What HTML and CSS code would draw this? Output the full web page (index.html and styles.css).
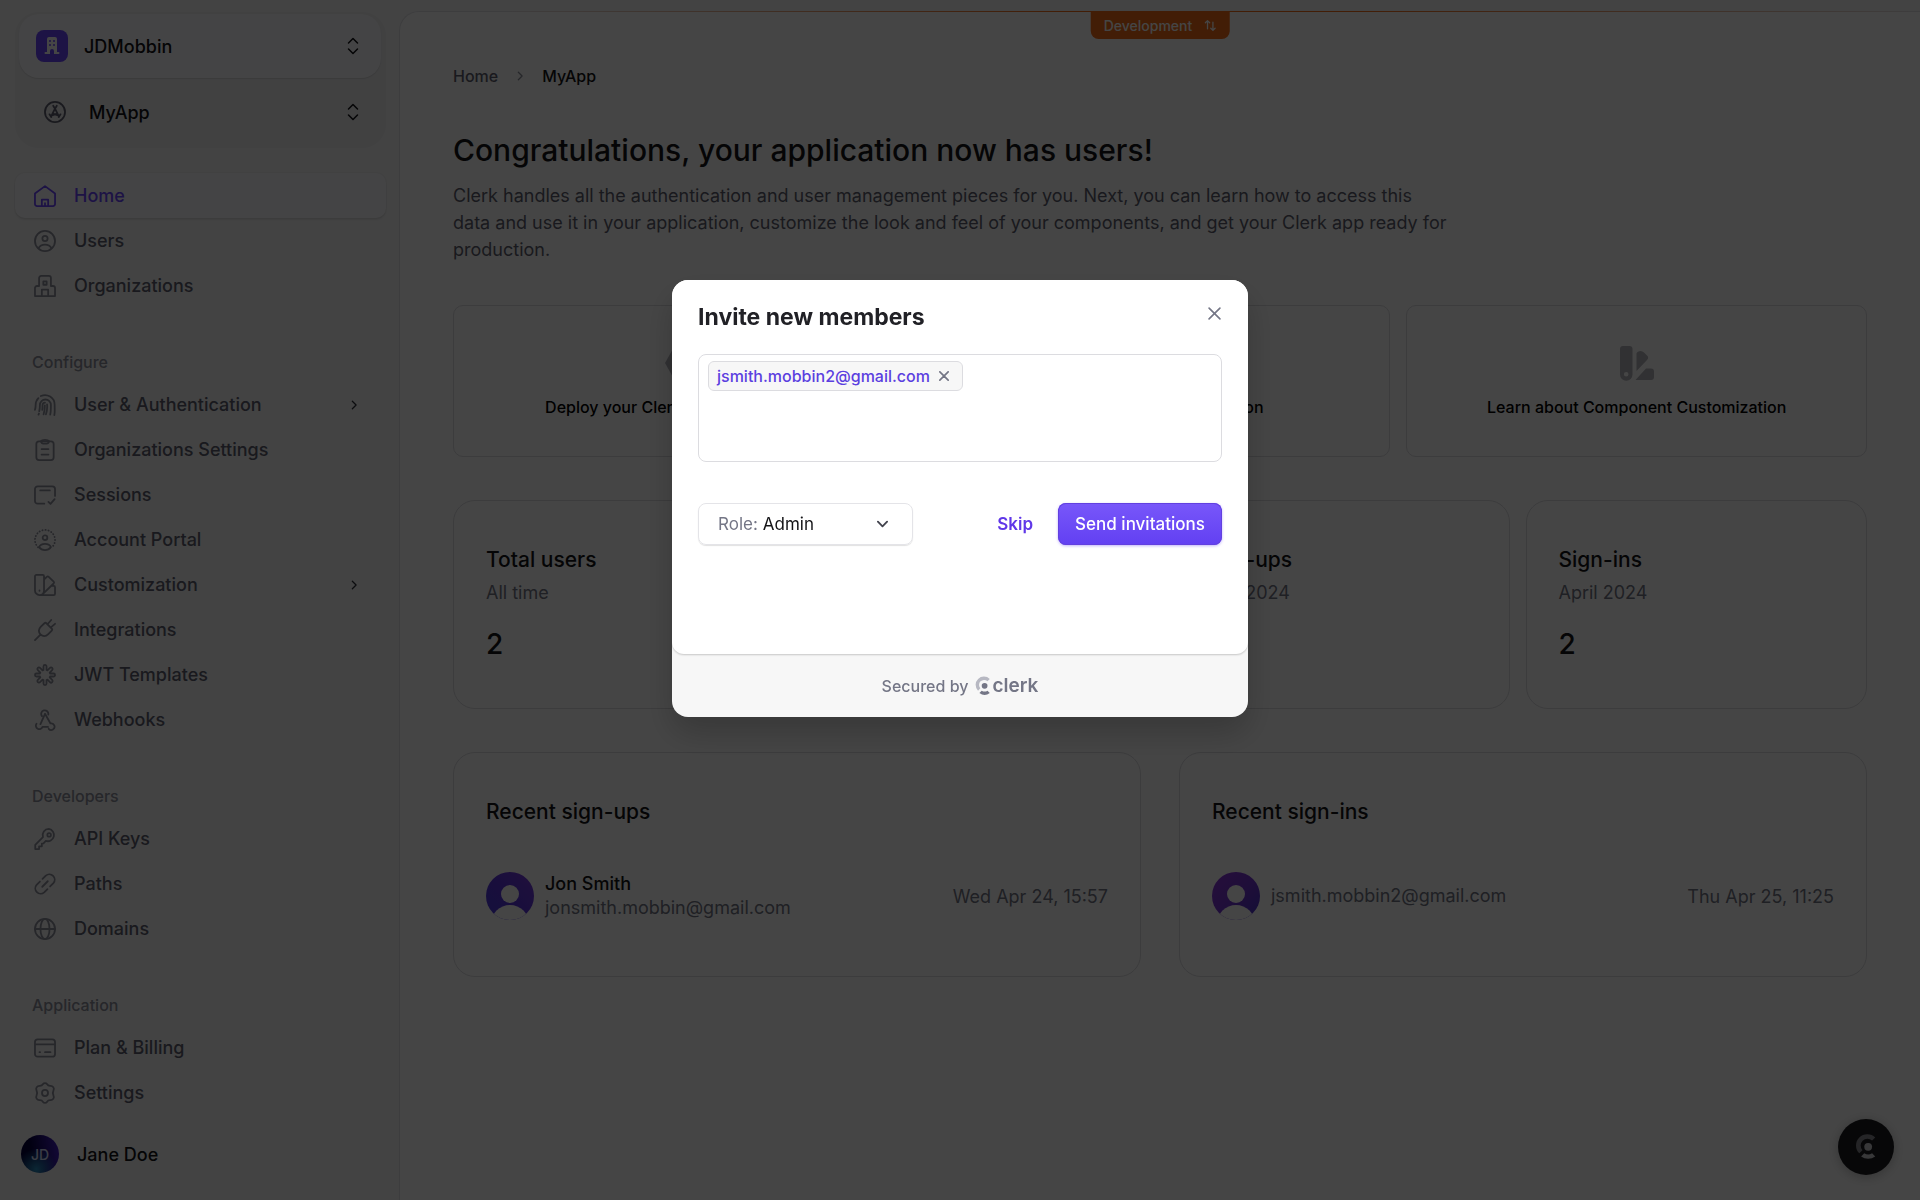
FILE: index.html
```
<!DOCTYPE html>
<html lang="en">
<head>
  <meta charset="UTF-8" />
  <meta name="viewport" content="width=device-width, initial-scale=1" />
  <title>MyApp | Clerk</title>
  <link rel="stylesheet" href="styles.css">
</head>
<body>
  <div class="app">
    <aside class="sidebar">
      <div class="switcher">
        <button class="switcher-org" type="button">
          <svg class="org-logo" viewBox="0 0 32 32">
            <rect width="32" height="32" rx="8" fill="#6c47ff"/>
            <path fill="#fff" d="M11 9a2 2 0 0 1 2-2h6a2 2 0 0 1 2 2v13h1.500a1 1 0 0 1 0 2H18v-3a2 2 0 0 0-4 0v3H9.500a1 1 0 0 1 0-2H11z"/>
            <g fill="#6c47ff"><circle cx="14" cy="11" r="1"/><circle cx="18" cy="11" r="1"/><circle cx="14" cy="15" r="1"/><circle cx="18" cy="15" r="1"/></g>
          </svg>
          <span>JDMobbin</span>
          <svg class="updown" viewBox="0 0 12 18"><path d="M1.500 6 6 1.500 10.500 6M1.500 12 6 16.500 10.500 12"/></svg>
        </button>
        <button class="switcher-app" type="button">
          <svg class="icon" viewBox="0 0 16 16"><circle cx="8" cy="8" r="7.300"/><path d="M6.700 3.500 8 5.600l1.300-2.100M8 5.600 5 11.500M8 5.600l3 5.900M4 9.700l1.300 2M12 9.700l-1.300 2M6.500 9.200l3.700 1.200M9.500 9.200l-3.700 1.200"/></svg>
          <span>MyApp</span>
          <svg class="updown" viewBox="0 0 12 18"><path d="M1.500 6 6 1.500 10.500 6M1.500 12 6 16.500 10.500 12"/></svg>
        </button>
      </div>

      <nav class="nav">
        <div class="nav-group">
          <a class="nav-item active" href="#home">
            <svg class="icon" viewBox="0 0 16 16"><path d="M.7 6.200 8 .8l7.300 5.400v7.600a1.500 1.500 0 0 1-1.500 1.500H2.200A1.500 1.500 0 0 1 .7 13.800zM5.700 15v-4.300h4.600V15M8 15v-1.800"/></svg>
            Home
          </a>
          <a class="nav-item" href="#users">
            <svg class="icon" viewBox="0 0 16 16"><circle cx="8" cy="8" r="7.300"/><circle cx="8" cy="6.200" r="1.900"/><path d="M3.300 13.200C4.300 11.300 6 10.600 8 10.600s3.700.7 4.700 2.600"/></svg>
            Users
          </a>
          <a class="nav-item" href="#organizations">
            <svg class="icon" viewBox="0 0 16 16"><path d="M3.700 8V2.200A1.500 1.500 0 0 1 5.200.7h5.600a1.500 1.500 0 0 1 1.500 1.500V8h1.500a1.500 1.500 0 0 1 1.500 1.500v5.800H.7V9.500A1.500 1.500 0 0 1 2.200 8zM5.700 15v-4.300h4.600V15M6.800 4.700h2.400v2.400H6.800z"/></svg>
            Organizations
          </a>
        </div>

        <div class="nav-group">
          <h2 class="nav-label">Configure</h2>
          <a class="nav-item" href="#user-auth">
            <svg class="icon" viewBox="0 0 16 16"><path d="M.7 11.500c.5-1.500.5-2.400.5-3.500 0-2 .8-3.800 2-5M5 1.500a7 7 0 0 1 10 6.300c0 2.600.3 5-.2 7.500M3.800 12.500c.5-1.800.5-3 .5-4.500a4 4 0 0 1 8 0c0 2.800 0 4.800-.5 7M7 14.800c.6-2.300.9-4.300.9-6.600M9.500 7.500c.3 2.500-.1 5-.8 7.300M3.300 15l.3-.8M6 11.500c.2-1.200.2-2 .2-3.300 0-1 .8-1.900 1.800-1.900"/></svg>
            User &amp; Authentication
            <svg class="chevron" viewBox="0 0 8 12"><path d="m2 1.500 4.500 4.500L2 10.500"/></svg>
          </a>
          <a class="nav-item" href="#org-settings">
            <svg class="icon" viewBox="0 0 16 16"><rect x="1.700" y="1.700" width="12.600" height="13.600" rx="2"/><path d="M5 1.700c.3 1.200 1 1.700 1.800 1.700h2.400c.8 0 1.500-.5 1.800-1.700C10.500.9 9.800.7 8 .7S5.500.9 5 1.700zM5.500 7.300h5M5.500 11.300h5"/></svg>
            Organizations Settings
          </a>
          <a class="nav-item" href="#sessions">
            <svg class="icon" viewBox="0 0 16 16"><path d="M7.500 14.300H2.700a2 2 0 0 1-2-2V3.700a2 2 0 0 1 2-2h10.600a2 2 0 0 1 2 2v5M4.500 4.700h7M10.500 13l1.500 1.500 3-3.500"/></svg>
            Sessions
          </a>
          <a class="nav-item" href="#account-portal">
            <svg class="icon" viewBox="0 0 16 16"><path stroke-dasharray=".2 2" d="M3 13.300a7.300 7.300 0 1 1 10 0"/><circle cx="8" cy="6.300" r="1.700"/><path d="M3.700 13.200c.7-1.800 2.300-2.400 4.300-2.400s3.600.6 4.300 2.400c-1 1.300-2.500 2.100-4.300 2.100s-3.300-.8-4.300-2.100z"/></svg>
            Account Portal
          </a>
          <a class="nav-item" href="#customization">
            <svg class="icon" viewBox="0 0 16 16"><path d="M.7 1.700a1 1 0 0 1 1-1h4.600a1 1 0 0 1 1 1V12a3.300 3.300 0 0 1-6.600 0zM7.300 4l2-1.900a1 1 0 0 1 1.400 0l3.600 3.400a1 1 0 0 1 0 1.400L6.500 14.500M12.500 8.700h1.800a1 1 0 0 1 1 1v4.600a1 1 0 0 1-1 1H4M4 12v.2"/></svg>
            Customization
            <svg class="chevron" viewBox="0 0 8 12"><path d="m2 1.500 4.500 4.500L2 10.500"/></svg>
          </a>
          <a class="nav-item" href="#integrations">
            <svg class="icon" viewBox="0 0 16 16"><path d="m.7 15.300 4-4M4.700 11.300C2.800 9 3.300 7.300 5 5.600l2.600-2.500a1 1 0 0 1 1.400 0l3.900 3.900a1 1 0 0 1 0 1.400L10.400 11c-1.700 1.700-3.400 2.200-5.700.3zM10.300 3.300 12.500.7M12.700 5.700l2.600-2.200"/></svg>
            Integrations
          </a>
          <a class="nav-item" href="#jwt">
            <svg class="icon" viewBox="0 0 16 16"><path d="M6.900 4.300V1.800a1.100 1.100 0 0 1 2.200 0v2.500L9.800 4.600 11.600 2.800A1.100 1.100 0 0 1 13.200 4.400L11.400 6.200 11.700 6.900H14.200a1.100 1.100 0 0 1 0 2.200H11.700L11.400 9.800 13.200 11.600A1.100 1.100 0 0 1 11.600 13.200L9.800 11.400 9.100 11.700V14.200a1.100 1.100 0 0 1-2.200 0V11.700L6.200 11.400 4.400 13.200A1.100 1.100 0 0 1 2.800 11.600L4.600 9.800 4.300 9.100H1.800a1.100 1.100 0 0 1 0-2.200H4.300L4.600 6.200 2.800 4.400A1.100 1.100 0 0 1 4.400 2.800L6.200 4.600z"/></svg>
            JWT Templates
          </a>
          <a class="nav-item" href="#webhooks">
            <svg class="icon" viewBox="0 0 16 16"><path d="M5.800 5.200A2.600 2.600 0 1 1 10.400 4M8 3.500 4.700 11M8 3.500l4 7M1.800 10.700a2.500 2.500 0 1 0 4.400 2.300h4M12 10.500a2.400 2.400 0 1 1-1.300 3.900"/></svg>
            Webhooks
          </a>
        </div>

        <div class="nav-group">
          <h2 class="nav-label">Developers</h2>
          <a class="nav-item" href="#api-keys">
            <svg class="icon" viewBox="0 0 16 16"><path d="M10.800.7a4.500 4.500 0 0 0-4.300 5.900L.9 12.200v3.100h2.800v-2h2v-2l1.200-.2 1.700-1.700a4.500 4.500 0 1 0 2.200-8.700z"/><circle cx="11" cy="5" r="1.300"/></svg>
            API Keys
          </a>
          <a class="nav-item" href="#paths">
            <svg class="icon" viewBox="0 0 16 16"><path d="m6.200 4.300 2.400-2.400a3.900 3.900 0 0 1 5.500 5.500l-2.400 2.400M9.800 11.700l-2.400 2.400a3.900 3.900 0 0 1-5.500-5.500l2.400-2.400M6 10l4-4"/></svg>
            Paths
          </a>
          <a class="nav-item" href="#domains">
            <svg class="icon" viewBox="0 0 16 16"><circle cx="8" cy="8" r="7.300"/><ellipse cx="8" cy="8" rx="3.300" ry="7.300"/><path d="M.7 8h14.600"/></svg>
            Domains
          </a>
        </div>

        <div class="nav-group">
          <h2 class="nav-label">Application</h2>
          <a class="nav-item" href="#billing">
            <svg class="icon" viewBox="0 0 16 16"><rect x=".7" y="1.700" width="14.600" height="12.600" rx="2"/><path d="M1 5.300h14M4 11h.4M8 11h4"/></svg>
            Plan &amp; Billing
          </a>
          <a class="nav-item" href="#settings">
            <svg class="icon" viewBox="0 0 16 16"><path d="M6.600 1.500c.6-1 2.200-1 2.800 0 .6 1 1.400 1.400 2.600 1.300 1.700-.1 3 1.700 2.200 3.200-.5 1-.5 3 0 4 .8 1.500-.5 3.300-2.200 3.200-1.200-.1-2 .3-2.600 1.300-.6 1-2.200 1-2.800 0-.6-1-1.400-1.400-2.600-1.300-1.700.1-3-1.700-2.200-3.200.5-1 .5-3 0-4-.8-1.500.5-3.300 2.200-3.200 1.200.1 2-.3 2.600-1.300z"/><circle cx="8" cy="8" r="2.200"/></svg>
            Settings
          </a>
        </div>
      </nav>

      <button class="account" type="button">
        <span class="account-avatar">JD</span>
        Jane Doe
      </button>
    </aside>

    <main class="main">
      <button class="env-tag" type="button">
        Development
        <svg class="env-icon" viewBox="0 0 12 12"><path d="M3.500 9V1.500M1.500 3.500l2-2 2 2M8.500 3v7.500M6.500 8.500l2 2 2-2"/></svg>
      </button>

      <div class="breadcrumb">
        <a href="#home">Home</a>
        <svg class="chevron" viewBox="0 0 8 12"><path d="m2 1.500 4.500 4.500L2 10.500"/></svg>
        <a class="current" href="#myapp">MyApp</a>
      </div>

      <h1>Congratulations, your application now has users!</h1>
      <p class="intro">Clerk handles all the authentication and user management pieces for you. Next, you can learn how to access this data and use it in your application, customize the look and feel of your components, and get your Clerk app ready for production.</p>

      <div class="links">
        <a class="link-card" href="#deploy">
          <svg class="link-icon" viewBox="0 0 36 36"><path d="M9 2h18l9 16-9 16H9L0 18z"/></svg>
          Deploy your Clerk app to production
        </a>
        <a class="link-card" href="#docs">
          <svg class="link-icon" viewBox="0 0 36 36"><rect x="5" y="2" width="26" height="32" rx="5"/></svg>
          Explore the Documentation
        </a>
        <a class="link-card" href="#components">
          <svg class="link-icon" viewBox="0 0 36 36"><path fill-rule="evenodd" d="M1 4a3 3 0 0 1 3-3h6.500a3 3 0 0 1 3 3v25.500a6.200 6.200 0 0 1-12.500 0zM7.200 27a2.300 2.300 0 1 0 0 4.600 2.300 2.300 0 0 0 0-4.600z"/><path d="M17.500 8.500a3 3 0 0 1 1.500-1.700 5 5 0 0 1 6 .8l3 3a3 3 0 0 1 0 4.400L17.500 26zM27 23.500h5a3 3 0 0 1 3 3V32a3 3 0 0 1-3 3H16.500z"/></svg>
          Learn about Component Customization
        </a>
      </div>

      <div class="stats">
        <section class="card">
          <h3>Total users</h3>
          <p>All time</p>
          <strong>2</strong>
        </section>
        <section class="card">
          <h3>Active users</h3>
          <p>April 2024</p>
          <strong>2</strong>
        </section>
        <section class="card">
          <h3>Sign-ups</h3>
          <p>April 2024</p>
          <strong>2</strong>
        </section>
        <section class="card">
          <h3>Sign-ins</h3>
          <p>April 2024</p>
          <strong>2</strong>
        </section>
      </div>

      <div class="recent">
        <section class="card">
          <h3>Recent sign-ups</h3>
          <div class="person">
            <svg class="avatar" viewBox="0 0 48 48">
              <defs>
                <linearGradient id="blue" x1="1" y1="0" x2="0" y2="1"><stop offset="0" stop-color="#7a3ddc"/><stop offset=".5" stop-color="#5b35dc"/><stop offset="1" stop-color="#4a3ae0"/></linearGradient>
                <clipPath id="round"><circle cx="24" cy="24" r="24"/></clipPath>
              </defs>
              <g clip-path="url(#round)"><rect width="48" height="48" fill="url(#blue)"/><circle cx="24" cy="22" r="9" fill="#fff"/><circle cx="24" cy="52" r="19" fill="#fff"/></g>
            </svg>
            <div class="who">
              <b>Jon Smith</b>
              <span>jonsmith.mobbin@gmail.com</span>
            </div>
            <time>Wed Apr 24, 15:57</time>
          </div>
        </section>
        <section class="card">
          <h3>Recent sign-ins</h3>
          <div class="person">
            <svg class="avatar" viewBox="0 0 48 48">
              <defs>
                <linearGradient id="violet" x1="0" y1="0" x2="1" y2="1"><stop offset="0" stop-color="#8c35d8"/><stop offset=".5" stop-color="#7434d2"/><stop offset="1" stop-color="#4436c8"/></linearGradient>
              </defs>
              <g clip-path="url(#round)"><rect width="48" height="48" fill="url(#violet)"/><circle cx="24" cy="22" r="9" fill="#fff"/><circle cx="24" cy="52" r="19" fill="#fff"/></g>
            </svg>
            <div class="who">
              <span>jsmith.mobbin2@gmail.com</span>
            </div>
            <time>Thu Apr 25, 11:25</time>
          </div>
        </section>
      </div>
    </main>

    <button class="help" type="button" aria-label="Help">
      <svg viewBox="0 0 20 24"><path fill="#8a8a90" d="M18.500 3.200 15.600 6a6.300 6.300 0 0 0-8.900 8.900l-2.900 2.900A10.300 10.300 0 0 1 18.500 3.200z"/><circle cx="12" cy="11.800" r="3.600" fill="#d0d0d4"/><path fill="#d0d0d4" d="M18.500 20.700a10.500 10.500 0 0 1-13 0l2.900-2.900a6.500 6.500 0 0 0 7.200 0z"/></svg>
    </button>
  </div>

  <div class="overlay">
    <div class="modal" role="dialog" aria-labelledby="invite-title">
      <form class="modal-body">
        <div class="modal-head">
          <h2 id="invite-title">Invite new members</h2>
          <button class="close" type="button" aria-label="Close">
            <svg viewBox="0 0 12 12"><path d="m1 1 10 10M11 1 1 11"/></svg>
          </button>
        </div>

        <div class="emails">
          <span class="chip">
            jsmith.mobbin2@gmail.com
            <button type="button" aria-label="Remove">
              <svg viewBox="0 0 12 12"><path d="m1 1 10 10M11 1 1 11"/></svg>
            </button>
          </span>
          <textarea aria-label="Email addresses"></textarea>
        </div>

        <div class="actions">
          <div class="role">
            <label for="role">Role:</label>
            <select id="role">
              <option>Admin</option>
              <option>Member</option>
            </select>
            <svg viewBox="0 0 12 8"><path d="m1 1.500 5 5 5-5"/></svg>
          </div>
          <button class="skip" type="button">Skip</button>
          <button class="send" type="submit">Send invitations</button>
        </div>
      </form>

      <div class="modal-foot">
        Secured by
        <a class="clerk" href="#clerk">
          <svg viewBox="0 0 20 24"><path fill="#b7b8c2" d="M18.500 3.200 15.600 6a6.300 6.300 0 0 0-8.900 8.900l-2.900 2.900A10.300 10.300 0 0 1 18.500 3.200z"/><circle cx="12" cy="11.800" r="3.600" fill="#747686"/><path fill="#747686" d="M18.500 20.700a10.500 10.500 0 0 1-13 0l2.900-2.900a6.500 6.500 0 0 0 7.200 0z"/></svg>
          clerk
        </a>
      </div>
    </div>
  </div>
</body>
</html>
```
FILE: styles.css
```
* {
  box-sizing: border-box;
}

body {
  margin: 0;
  font-family: Inter, "Liberation Sans", sans-serif;
  font-size: 18px;
  color: #131316;
  background: #f7f7f8;
}

h1, h2, h3, p {
  margin: 0;
}

a {
  color: inherit;
  text-decoration: none;
}

button {
  font: inherit;
  color: inherit;
  background: none;
  border: none;
  padding: 0;
  cursor: pointer;
}

svg {
  fill: none;
  stroke-linecap: round;
  stroke-linejoin: round;
  flex-shrink: 0;
}

.app {
  display: flex;
  min-height: 100vh;
}

/* sidebar */

.sidebar {
  width: 399px;
  flex-shrink: 0;
  padding: 12px 13px 24px 15px;
  display: flex;
  flex-direction: column;
}

.switcher {
  background: #eeeef0;
  border-radius: 24px;
  padding: 2px 5px 2px 4px;
  font-weight: 500;
}

.switcher button {
  display: flex;
  align-items: center;
  width: 100%;
}

.switcher span {
  flex: 1;
  text-align: left;
}

.switcher-org {
  height: 64px;
  padding: 0 22px 0 17px;
  gap: 16px;
  background: #fcfcfd;
  border-radius: 20px;
  box-shadow: 0 1px 1px rgba(0, 0, 0, 0.1);
}

.switcher-app {
  height: 68px;
  padding: 0 22px 0 25px;
  gap: 23px;
}

.switcher-app .icon {
  color: #5e5f6e;
}

.org-logo {
  width: 32px;
  height: 32px;
}

.updown {
  width: 12px;
  height: 18px;
  stroke: #131316;
  stroke-width: 1.5;
}

.icon {
  width: 22px;
  height: 22px;
  stroke: currentColor;
  stroke-width: 1.3;
}

.nav {
  display: flex;
  flex-direction: column;
  gap: 44px;
  margin-top: 25px;
}

.nav-group {
  display: flex;
  flex-direction: column;
}

.nav-label {
  margin: 0 0 10px 17px;
  font-size: 16px;
  line-height: 20px;
  font-weight: 500;
  color: #8e8f9c;
}

.nav-item {
  display: flex;
  align-items: center;
  gap: 18px;
  height: 45px;
  padding: 0 26px 0 19px;
  border-radius: 10px;
  font-weight: 500;
  color: #5e5f6e;
}

.nav-item .icon {
  color: #8e8f9c;
}

.nav-item.active,
.nav-item.active .icon {
  color: #6c47ff;
}

.nav-item.active {
  background: #fcfcfd;
  box-shadow: 0 0 0 1px rgba(0, 0, 0, 0.03), 0 2px 2px rgba(0, 0, 0, 0.08);
}

.chevron {
  width: 8px;
  height: 12px;
  margin-left: auto;
  stroke: currentColor;
  stroke-width: 1.5;
}

.nav-item .chevron {
  height: 10px;
  color: #2f3037;
  margin-right: 2px;
}

.account {
  display: flex;
  align-items: center;
  gap: 18px;
  margin-top: 20px;
  padding-left: 6px;
  font-weight: 500;
}

.account-avatar {
  display: flex;
  align-items: center;
  justify-content: center;
  width: 38px;
  height: 38px;
  border-radius: 50%;
  font-size: 14px;
  color: #d8e0ff;
  background: radial-gradient(circle at 40% 90%, #2a8fc0, transparent 50%), linear-gradient(80deg, #04003c 30%, #4a22d0);
}

/* main panel */

.main {
  position: relative;
  flex: 1;
  min-width: 0;
  margin-top: 11px;
  padding: 53px 53px 40px;
  background: #fff;
  border-left: 1px solid #e2e2e6;
  border-top: 1px solid #e2e2e6;
  border-radius: 20px 0 0 0;
}

.main::before {
  content: "";
  position: absolute;
  top: -1px;
  left: 100px;
  right: 0;
  height: 1px;
  background: linear-gradient(90deg, transparent, #f36b16 40%, #f36b16 60%, transparent);
}

.env-tag {
  position: absolute;
  top: 0;
  left: 50%;
  transform: translateX(-50%);
  display: flex;
  align-items: center;
  gap: 11px;
  height: 27px;
  padding: 0 13px;
  border-radius: 0 0 8px 8px;
  background: #f36b16;
  color: #fff;
  font-size: 14px;
  font-weight: 500;
}

.env-icon {
  width: 13px;
  height: 13px;
  stroke: currentColor;
  stroke-width: 1.2;
}

.breadcrumb {
  display: flex;
  align-items: center;
  gap: 18px;
  font-size: 16px;
  line-height: 22px;
  font-weight: 500;
  color: #5e5f6e;
}

.breadcrumb .chevron {
  width: 8px;
  height: 10px;
  margin: 0;
  color: #8e8f9c;
}

.breadcrumb .current {
  color: #131316;
}

h1 {
  margin-top: 43px;
  font-size: 30px;
  line-height: 40px;
  font-weight: 500;
}

.intro {
  max-width: 1000px;
  margin-top: 12px;
  font-size: 18px;
  line-height: 27px;
  color: #5e5f6e;
}

.links {
  display: grid;
  grid-template-columns: repeat(3, 1fr);
  gap: 16px;
  margin-top: 42px;
}

.link-card {
  display: flex;
  flex-direction: column;
  align-items: center;
  justify-content: center;
  gap: 16px;
  height: 152px;
  border: 1px solid #dcdce0;
  border-radius: 10px;
  font-size: 16px;
  line-height: 20px;
  font-weight: 500;
  color: #000;
}

.link-icon {
  width: 36px;
  height: 36px;
  fill: #b4b4bb;
}

.stats,
.recent {
  display: grid;
  grid-template-columns: repeat(4, 1fr);
  gap: 16px;
  margin-top: 43px;
}

.recent {
  grid-template-columns: repeat(2, 1fr);
  gap: 38px;
}

.card {
  padding: 45px 32px 46px;
  border: 1px solid #dcdce0;
  border-radius: 22px;
}

h3 {
  font-size: 21px;
  line-height: 28px;
  font-weight: 500;
}

.card p {
  margin-top: 7px;
  line-height: 24px;
  color: #747686;
}

.card strong {
  display: block;
  margin-top: 21px;
  font-size: 28px;
  line-height: 36px;
  font-weight: 500;
}

.person {
  display: flex;
  align-items: center;
  gap: 11px;
  margin-top: 46px;
  margin-bottom: 10px;
  color: #747686;
}

.avatar {
  width: 48px;
  height: 48px;
}

.who {
  display: flex;
  flex-direction: column;
  line-height: 24px;
}

.who b {
  font-weight: 500;
  color: #131316;
}

.person time {
  margin-left: auto;
}

.help {
  position: fixed;
  right: 26px;
  bottom: 25px;
  display: flex;
  align-items: center;
  justify-content: center;
  width: 56px;
  height: 56px;
  border-radius: 50%;
  background: #1c1c20;
  box-shadow: 0 2px 12px rgba(0, 0, 0, 0.25);
}

.help svg {
  width: 22px;
  height: 26px;
}

/* invite dialog */

.overlay {
  position: fixed;
  inset: 0;
  display: flex;
  justify-content: center;
  align-items: flex-start;
  padding-top: 280px;
  background: rgba(0, 0, 0, 0.73);
}

.modal {
  width: 576px;
  border-radius: 16px;
  background: #f7f7f7;
  overflow: hidden;
  box-shadow: 0 16px 32px rgba(0, 0, 0, 0.2);
}

.modal-body {
  padding: 22px 26px 109px;
  background: #fff;
  border-radius: 0 0 12px 12px;
  box-shadow: 0 1px 2px rgba(0, 0, 0, 0.2);
}

.modal-head {
  display: flex;
  justify-content: space-between;
  align-items: flex-start;
}

.modal-head h2 {
  font-size: 23px;
  line-height: 30px;
  font-weight: 700;
  color: #212126;
}

.close {
  display: flex;
  padding: 5px 1px;
}

.close svg,
.chip svg {
  width: 13px;
  height: 13px;
  stroke: #747686;
  stroke-width: 1.5;
}

.emails {
  display: flex;
  flex-direction: column;
  align-items: flex-start;
  height: 108px;
  margin-top: 22px;
  padding: 6px 9px;
  border: 1px solid #dcdce0;
  border-radius: 8px;
}

.chip {
  display: flex;
  align-items: center;
  gap: 9px;
  height: 30px;
  padding: 0 13px 0 8px;
  background: #f7f7f7;
  border: 1px solid #dcdce0;
  border-radius: 6px;
  font-size: 16px;
  font-weight: 500;
  color: #5b3fe0;
}

.chip button {
  display: flex;
}

.chip svg {
  width: 10px;
  height: 10px;
  stroke-width: 2;
}

.emails textarea {
  flex: 1;
  width: 100%;
  border: none;
  outline: none;
  resize: none;
  font: inherit;
  background: none;
}

.actions {
  display: flex;
  align-items: center;
  margin-top: 41px;
}

.role {
  position: relative;
  display: flex;
  align-items: center;
  gap: 5px;
  width: 215px;
  height: 42px;
  padding-left: 19px;
  border: 1px solid #e4e4e8;
  border-radius: 8px;
  box-shadow: 0 1px 1px rgba(0, 0, 0, 0.12);
  font-size: 17px;
  color: #747686;
}

.role select {
  flex: 1;
  height: 100%;
  padding: 0;
  appearance: none;
  border: none;
  outline: none;
  background: none;
  font: inherit;
  color: #131316;
}

.role svg {
  position: absolute;
  right: 24px;
  width: 11px;
  height: 8px;
  stroke: #42434d;
  stroke-width: 2;
  pointer-events: none;
}

.skip {
  margin-left: auto;
  margin-right: 25px;
  font-size: 17px;
  font-weight: 600;
  color: #6037e8;
}

.send {
  width: 164px;
  height: 42px;
  border-radius: 8px;
  background: linear-gradient(#7857fa, #6240f2);
  box-shadow: 0 1px 3px rgba(98, 64, 242, 0.4), inset 0 0 0 1px #6240e0;
  font-size: 17px;
  font-weight: 500;
  color: #fff;
}

.modal-foot {
  display: flex;
  align-items: center;
  justify-content: center;
  gap: 7px;
  height: 63px;
  font-size: 16px;
  font-weight: 500;
  color: #747686;
}

.clerk {
  display: flex;
  align-items: center;
  gap: 1px;
  font-size: 19px;
  line-height: 24px;
  font-weight: 600;
}

.clerk svg {
  width: 16px;
  height: 20px;
}
```
